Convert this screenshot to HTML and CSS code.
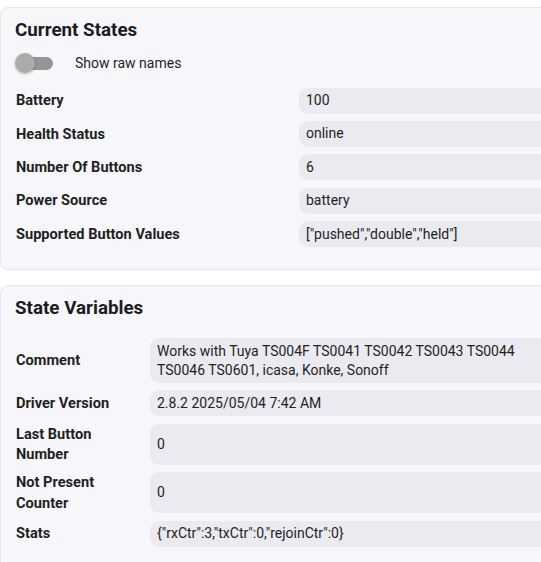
FILE: index.html
```html
<!DOCTYPE html>
<html>
<head>
<meta charset="utf-8">
<link rel="stylesheet" href="styles.css">
</head>
<body>
<div class="page">
  <section class="card">
    <h2 class="card-title">Current States</h2>
    <div class="toggle-row">
      <span class="toggle"><span class="track"></span><span class="knob"></span></span>
      <span class="toggle-label">Show raw names</span>
    </div>
    <div class="props props-wide">
      <div class="label">Battery</div><div class="value">100</div>
      <div class="label">Health Status</div><div class="value">online</div>
      <div class="label">Number Of Buttons</div><div class="value">6</div>
      <div class="label">Power Source</div><div class="value">battery</div>
      <div class="label">Supported Button Values</div><div class="value">["pushed","double","held"]</div>
    </div>
  </section>
  <section class="card card-second">
    <h2 class="card-title">State Variables</h2>
    <div class="props props-narrow">
      <div class="label">Comment</div><div class="value">Works with Tuya TS004F TS0041 TS0042 TS0043 TS0044 TS0046 TS0601, icasa, Konke, Sonoff</div>
      <div class="label">Driver Version</div><div class="value">2.8.2 2025/05/04 7:42 AM</div>
      <div class="label">Last Button Number</div><div class="value">0</div>
      <div class="label">Not Present Counter</div><div class="value">0</div>
      <div class="label">Stats</div><div class="value">{"rxCtr":3,"txCtr":0,"rejoinCtr":0}</div>
    </div>
  </section>
</div>
</body>
</html>
```
FILE: styles.css
```css
html, body {
  margin: 0;
  padding: 0;
  overflow: hidden;
  background: #ffffff;
}
body {
  font-family: Roboto, "Noto Sans", sans-serif;
  color: #1f1f23;
}
.page {
  padding: 7px 0 0 0;
  width: 600px;
}
.card {
  box-sizing: border-box;
  width: 571px;
  background: #f7f7fb;
  border: 1px solid #e6e6ea;
  border-radius: 8px;
  padding: 10px 15px 22px 15px;
}
.card-second {
  margin-top: 15px;
}
.card-title {
  margin: 0 0 0 -1px;
  font-size: 18.8px;
  line-height: 24px;
  font-weight: 700;
  color: #1c1b1f;
}
.toggle-row {
  display: flex;
  align-items: center;
  height: 22px;
  margin-top: 10px;
  margin-left: -1px;
}
.toggle {
  position: relative;
  width: 38px;
  height: 22px;
  flex: none;
}
.track {
  position: absolute;
  left: 1px;
  right: 0;
  top: 5px;
  height: 13px;
  border-radius: 7px;
  background: #959595;
}
.knob {
  position: absolute;
  left: 0;
  top: 1px;
  width: 20px;
  height: 20px;
  border-radius: 50%;
  background: #ababab;
  box-shadow: 0 1px 3px rgba(0,0,0,0.25);
}
.toggle-label {
  margin-left: 22px;
  font-size: 14px;
  line-height: 20px;
  color: #1f1f23;
}
.props {
  display: grid;
  row-gap: 7.4px;
  margin-top: 13.5px;
}
.props-wide {
  grid-template-columns: 283px 1fr;
}
.props-narrow {
  grid-template-columns: 134px 1fr;
  margin-top: 18px;
}
.label {
  align-self: center;
  font-size: 14.6px;
  line-height: 20.5px;
  font-weight: 700;
  color: #1f1f23;
  padding-right: 8px;
}
.value {
  display: flex;
  align-items: center;
  min-height: 26px;
  box-sizing: border-box;
  padding: 3.5px 7px;
  font-size: 14px;
  line-height: 19px;
  background: #ebeaf0;
  border-radius: 9px;
  color: #1f1f23;
}
```
